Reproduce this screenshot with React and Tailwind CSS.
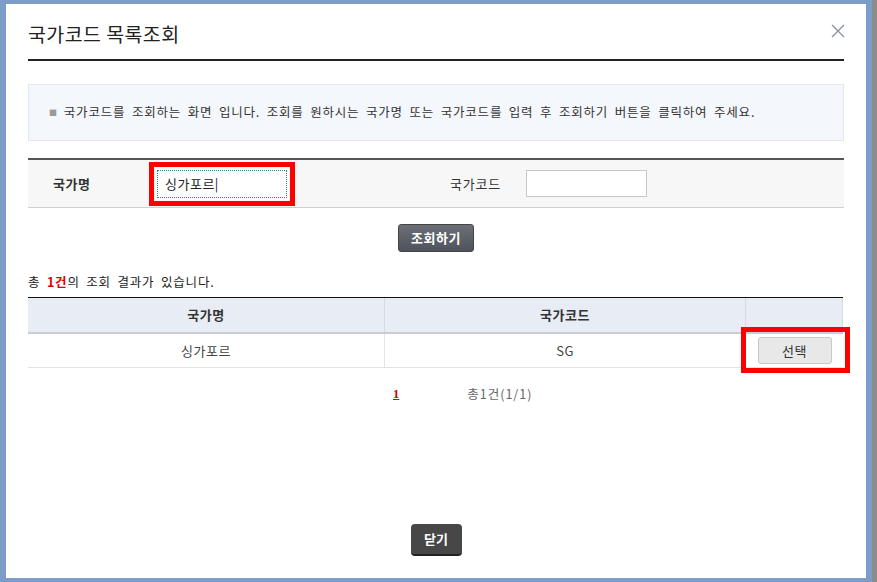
import React from 'react';

const font = { fontFamily: '"Noto Sans CJK KR", "Noto Sans", sans-serif' };

const CloseIcon = () => (
  <svg width="14" height="14" viewBox="0 0 14 14" className="block">
    <path d="M1 1 L13 13 M13 1 L1 13" stroke="#8a8ea6" strokeWidth="1.3" fill="none" />
  </svg>
);

export default function App() {
  return (
    <div className="w-[877px] h-[582px] bg-[#8c8c8c] flex overflow-hidden" style={font}>
      <div className="w-[872px] h-full bg-white border-l-[6px] border-r-[6px] border-t-[4px] border-b-[4px] border-[#7b9dc8] flex flex-col px-[22px] text-[#333]">
        {/* title */}
        <div className="flex items-center justify-between pt-[16px] pb-[11px] border-b-2 border-[#222]">
          <h1 className="text-[19.5px] leading-[28px] text-[#222] font-normal tracking-[0.4px]">국가코드 목록조회</h1>
          <div className="mr-[-1px] mt-[-6px]">
            <CloseIcon />
          </div>
        </div>

        {/* info box */}
        <div className="mt-[23px] h-[57px] bg-[#f4f7fc] border border-[#e1e7ef] flex items-center pl-[20px] text-[12.5px] text-[#333] tracking-[0.8px] [word-spacing:3px]">
          <span className="text-[#999] text-[8px] mr-[6px]">■</span>
          국가코드를 조회하는 화면 입니다. 조회를 원하시는 국가명 또는 국가코드를 입력 후 조회하기 버튼을 클릭하여 주세요.
        </div>

        {/* search */}
        <div className="mt-[17px] h-[50px] bg-[#f7f7f7] border-t-2 border-[#555] border-b border-b-[#d0d0d0] flex items-center text-[13px]">
          <span className="w-[127px] pl-[25px] font-bold text-[#333] tracking-[0.5px]">국가명</span>
          <div className="relative w-[134px] h-[32px] bg-white outline-1 outline-dotted outline-[#2a8a8a] outline-offset-[-3px] flex items-center pl-[10px] text-[13px] text-[#222] tracking-[0.5px]">
            싱가포르|
            <div className="absolute -inset-[6px] border-[5px] border-[#ff0000] pointer-events-none" />
          </div>
          <span className="ml-[161px] w-[76px] text-[#333] tracking-[0.8px]">국가코드</span>
          <div className="w-[121px] h-[27px] bg-white border border-[#c8c8c8]" />
        </div>

        {/* search button */}
        <div className="flex justify-center mt-[16px]">
          <button className="w-[76px] h-[28px] rounded-[3px] bg-gradient-to-b from-[#6b7078] to-[#4f545c] border border-[#444] text-white text-[13px] font-bold tracking-[0.5px]">
            조회하기
          </button>
        </div>

        {/* result count */}
        <p className="mt-[22px] text-[12.5px] leading-[16px] text-[#222] tracking-[0.8px] [word-spacing:3px]">
          총 <span className="text-[#e10000] font-bold">1건</span>의 조회 결과가 있습니다.
        </p>

        {/* table */}
        <div className="mt-[7px] w-[815px] border-t border-[#111] text-[13px]">
          <div className="flex h-[36px] bg-[#e8edf5] border-b-2 border-[#c9ccd2] font-bold text-[#333] tracking-[0.5px]">
            <div className="w-[357px] flex items-center justify-center border-r border-[#d5d9e0]">국가명</div>
            <div className="w-[361px] flex items-center justify-center border-r border-[#d5d9e0]">국가코드</div>
            <div className="flex-1 border-r border-[#d5d9e0]" />
          </div>
          <div className="flex h-[34px] border-b border-[#e3e3e3] text-[#444] tracking-[0.5px]">
            <div className="w-[357px] flex items-center justify-center border-r border-[#e3e3e3]">싱가포르</div>
            <div className="w-[361px] flex items-center justify-center border-r border-[#e3e3e3]">SG</div>
            <div className="flex-1 flex items-center justify-center">
              <div className="relative">
                <button className="w-[74px] h-[27px] rounded-[3px] bg-[#e8e8e8] border border-[#c8c8c8] text-[13px] text-[#333]">
                  선택
                </button>
                <div className="absolute top-[-10px] bottom-[-9px] left-[-17px] right-[-18px] border-[5px] border-[#ff0000] pointer-events-none" />
              </div>
            </div>
          </div>
        </div>

        {/* paging */}
        <div className="mt-[17px] flex items-center text-[12.5px]">
          <span className="ml-[365px] text-[#d40000] underline font-bold" style={{ fontFamily: '"Liberation Serif", serif' }}>1</span>
          <span className="ml-[68px] text-[#666] tracking-[1px]">총1건(1/1)</span>
        </div>

        {/* close */}
        <div className="mt-auto mb-[22px] flex justify-center">
          <button className="w-[51px] h-[32px] rounded-[4px] bg-[#474747] border-b-2 border-[#222] text-white text-[13px] font-bold">
            닫기
          </button>
        </div>
      </div>
    </div>
  );
}
